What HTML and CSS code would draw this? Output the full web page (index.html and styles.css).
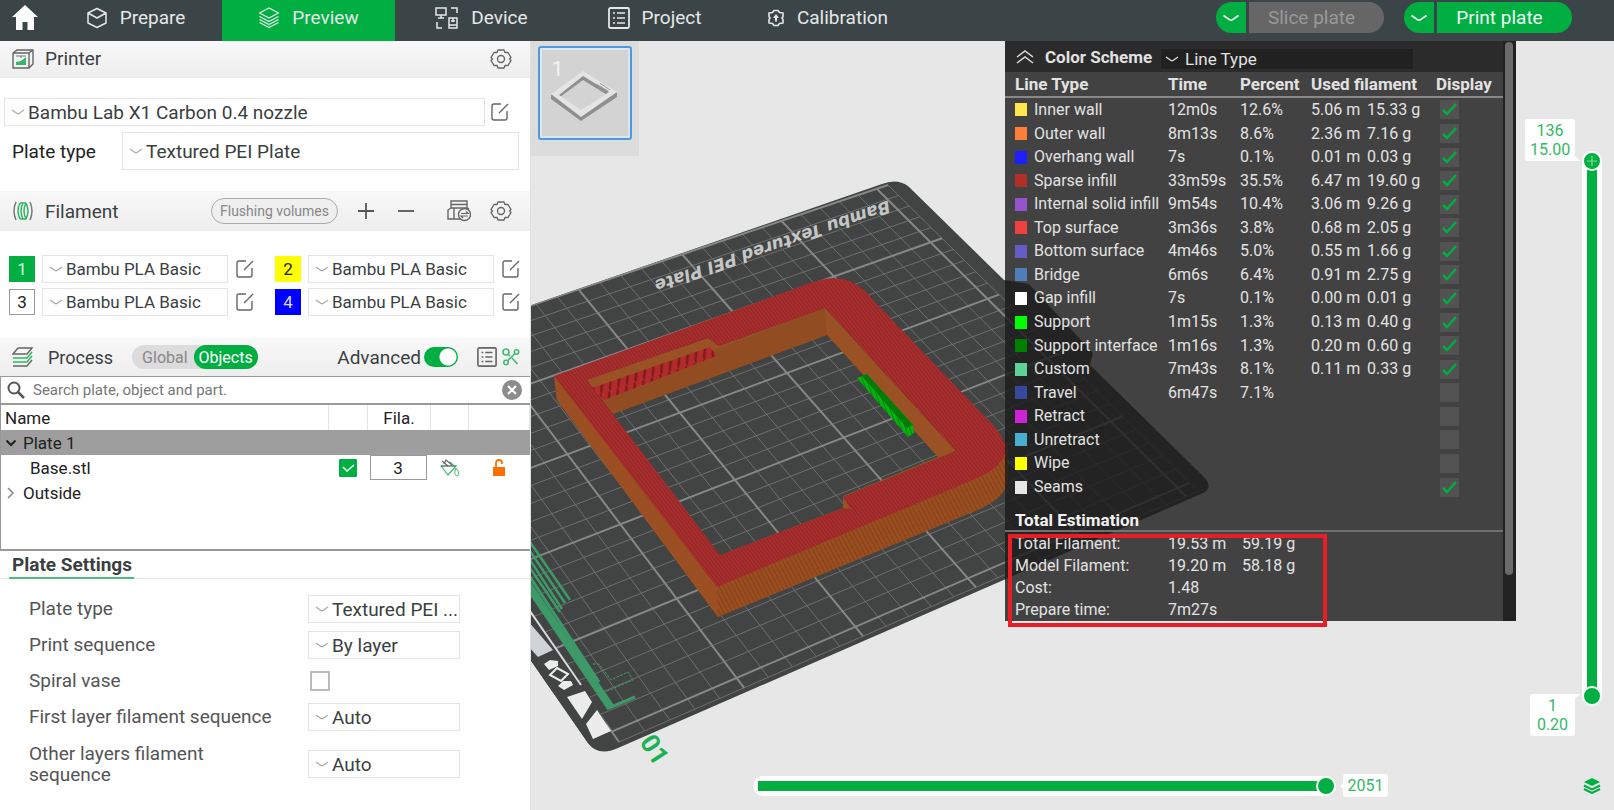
FILE: index.html
```html
<!DOCTYPE html>
<html lang="en">
<head>
<meta charset="utf-8">
<title>Preview</title>
<link rel="stylesheet" href="styles.css">
</head>
<body>
<svg class="defs" aria-hidden="true">
  <symbol id="chev" viewBox="0 0 14 8"><path d="M1 2 6 5.500Q7 6 8 5.500L13 2" fill="none" stroke="currentColor" stroke-width="1.300"/></symbol>
  <symbol id="edit" viewBox="0 0 20 20"><path d="M11 2H4Q2 2 2 4V16Q2 18 4 18H15Q17 18 17 16V9M9 11 18 2" fill="none" stroke="currentColor" stroke-width="1.400"/></symbol>
  <symbol id="gear" viewBox="0 0 22 22"><path d="M8 2 14 2 15 4.500 18 4.500 21 9.500 19.500 11 21 12.500 18 17.500 15 17.500 14 20 8 20 7 17.500 4 17.500 1 12.500 2.500 11 1 9.500 4 4.500 7 4.500Z" fill="none" stroke="currentColor" stroke-width="1.400" stroke-linejoin="round"/><circle cx="11" cy="11" r="3.500" fill="none" stroke="currentColor" stroke-width="1.400"/></symbol>
  <symbol id="list" viewBox="0 0 22 22"><rect x="1" y="1" width="20" height="20" rx="1.500" fill="none" stroke="currentColor" stroke-width="1.800"/><path d="M5 6H7M9 6H17M5 11H7M9 11H17M5 16H7M9 16H17" stroke="currentColor" stroke-width="1.600"/></symbol>
</svg>

<header class="topbar">
  <button class="home" aria-label="Home"><svg width="26" height="26" viewBox="0 0 26 26"><path d="M13 0 26 12H22V25H15.500V17H10.500V25H4V12H0Z" fill="#fff"/></svg></button>
  <nav class="tabs">
    <button class="tab"><svg width="22" height="22" viewBox="0 0 22 22"><path d="M11 1.500 20 6V16L11 20.500 2 16V6ZM2 6 11 11 20 6" fill="none" stroke="currentColor" stroke-width="1.500" stroke-linejoin="round"/></svg>Prepare</button>
    <button class="tab active"><svg width="22" height="22" viewBox="0 0 22 22"><path d="M11 1 20.500 6 11 11 1.500 6ZM1.500 9.500 11 14.500 20.500 9.500M1.500 12.500 11 17.500 20.500 12.500M1.500 15.500 11 20.500 20.500 15.500" fill="none" stroke="currentColor" stroke-width="1.400" stroke-linejoin="round"/></svg>Preview</button>
    <button class="tab"><svg width="24" height="24" viewBox="0 0 24 24"><path d="M1 2H11V9H1ZM6 9V12M3 12H9M16 2H22V7M2 16V22H7M14 12H22V22H14ZM14 19H22M18 12V16M16 15H20" fill="none" stroke="currentColor" stroke-width="1.500"/></svg>Device</button>
    <button class="tab"><svg width="22" height="22"><use href="#list"/></svg>Project</button>
    <button class="tab"><svg width="18" height="18" viewBox="0 0 18 18"><path d="M7 1.500H11L12.500 3.500 16 4V7.500L15 9 16 10.500V14L12.500 14.500 11 16.500H7L5.500 14.500 2 14V10.500L3 9 2 7.500V4L5.500 3.500Z" fill="none" stroke="currentColor" stroke-width="1.600" stroke-linejoin="round"/><path d="M9 5 12 9H10V12.500H8V9H6Z" fill="currentColor"/></svg>Calibration</button>
  </nav>
  <div class="actions">
    <div class="split"><button class="drop" aria-label="Slice options"><svg width="18" height="10"><use href="#chev"/></svg></button><button class="main off" disabled>Slice plate</button></div>
    <div class="split"><button class="drop" aria-label="Print options"><svg width="18" height="10"><use href="#chev"/></svg></button><button class="main">Print plate</button></div>
  </div>
</header>

<main class="work">
  <aside class="side">
    <h2 class="bar printer-bar">
      <svg width="22" height="20" viewBox="0 0 22 20"><path d="M1 4 5 1H21V15L17 19H1ZM1 4H17V19M17 4 21 1" fill="none" stroke="#666" stroke-width="1.400"/><path d="M4 16V13L9 12 14 8V16Z" fill="#35b865"/><path d="M4 7H14M9 7V9" stroke="#777"/></svg>
      <span>Printer</span>
      <button class="icon push" aria-label="Printer settings"><svg width="22" height="22"><use href="#gear"/></svg></button>
    </h2>
    <div class="printer">
      <div class="line">
        <span class="pick grow"><svg width="14" height="8"><use href="#chev"/></svg><select aria-label="Printer model"><option>Bambu Lab X1 Carbon 0.4 nozzle</option></select></span>
        <button class="icon" aria-label="Edit printer"><svg width="20" height="20"><use href="#edit"/></svg></button>
      </div>
      <div class="line plate-line">
        <label for="ptype">Plate type</label>
        <span class="pick tall grow"><svg width="14" height="8"><use href="#chev"/></svg><select id="ptype"><option>Textured PEI Plate</option></select></span>
      </div>
    </div>
    <h2 class="bar">
      <svg width="22" height="20" viewBox="0 0 22 20"><path d="M4 1Q0 10 4 19M18 1Q22 10 18 19" fill="none" stroke="#777" stroke-width="1.500"/><path d="M8 2Q4 10 8 18M11 2Q7 10 11 18M14 2Q10 10 14 18M14 2Q18 10 14 18M8 2H14M8 18H14" fill="none" stroke="#2fb563" stroke-width="1.500"/></svg>
      <span>Filament</span>
      <button class="flush push">Flushing volumes</button>
      <button class="icon" aria-label="Add filament"><svg width="16" height="16" viewBox="0 0 16 16"><path d="M8 0V16M0 8H16" stroke="#555" stroke-width="1.800"/></svg></button>
      <button class="icon minus" aria-label="Remove filament"><svg width="16" height="16" viewBox="0 0 16 16"><path d="M0 8H16" stroke="#555" stroke-width="1.800"/></svg></button>
      <button class="icon sync" aria-label="Sync filament"><svg width="24" height="22" viewBox="0 0 24 22"><path d="M4 1H20V8H4ZM4 4.500H20M4 8 1 10V19H14M7 8V19M20 8 22 9" fill="none" stroke="#666" stroke-width="1.400"/><circle cx="17.500" cy="14.500" r="6" fill="#f1f1f1" stroke="#666" stroke-width="1.400"/><path d="M14 13.500H21L19 11.500M21 16H14L16 18" fill="none" stroke="#666" stroke-width="1.200"/></svg></button>
      <button class="icon" aria-label="Filament settings"><svg width="22" height="22"><use href="#gear"/></svg></button>
    </h2>
    <div class="filaments">
      <div class="fil"><button class="chip green">1</button><span class="pick grow"><svg width="14" height="8"><use href="#chev"/></svg><select aria-label="Filament 1"><option>Bambu PLA Basic</option></select></span><button class="icon" aria-label="Edit filament 1"><svg width="20" height="20"><use href="#edit"/></svg></button></div>
      <div class="fil"><button class="chip yellow">2</button><span class="pick grow"><svg width="14" height="8"><use href="#chev"/></svg><select aria-label="Filament 2"><option>Bambu PLA Basic</option></select></span><button class="icon" aria-label="Edit filament 2"><svg width="20" height="20"><use href="#edit"/></svg></button></div>
      <div class="fil"><button class="chip white">3</button><span class="pick grow"><svg width="14" height="8"><use href="#chev"/></svg><select aria-label="Filament 3"><option>Bambu PLA Basic</option></select></span><button class="icon" aria-label="Edit filament 3"><svg width="20" height="20"><use href="#edit"/></svg></button></div>
      <div class="fil"><button class="chip blue">4</button><span class="pick grow"><svg width="14" height="8"><use href="#chev"/></svg><select aria-label="Filament 4"><option>Bambu PLA Basic</option></select></span><button class="icon" aria-label="Edit filament 4"><svg width="20" height="20"><use href="#edit"/></svg></button></div>
    </div>
    <div class="bar process">
      <svg width="22" height="20" viewBox="0 0 22 20"><path d="M6 1H20L15 7H1Z" fill="none" stroke="#666" stroke-width="1.400"/><path d="M1 11H15L20 5M1 15H15L20 9" fill="none" stroke="#2fb563" stroke-width="1.500"/><path d="M1 19H15L20 13" fill="none" stroke="#666" stroke-width="1.400"/></svg>
      <h2>Process</h2>
      <div class="scope"><button>Global</button><button class="on">Objects</button></div>
      <label class="adv push">Advanced<input type="checkbox" class="toggle" checked></label>
      <button class="icon table-icon" aria-label="Parameter table"><svg width="22" height="20"><use href="#list"/></svg></button>
      <button class="icon" aria-label="Compare presets"><svg width="18" height="18" viewBox="0 0 18 18"><g fill="none" stroke="#43bb73" stroke-width="1.600"><circle cx="4" cy="4" r="3"/><circle cx="14.500" cy="4" r="2.200"/><circle cx="4" cy="14.500" r="2.200"/><path d="M6 6 8 8M13 5.500 5.500 13M10 10 15.500 16"/></g></svg></button>
    </div>
    <div class="objects">
      <div class="search">
        <svg width="18" height="18" viewBox="0 0 18 18"><circle cx="7" cy="7" r="5.500" fill="none" stroke="#555" stroke-width="2"/><path d="M11 11 17 17" stroke="#555" stroke-width="2.500"/></svg>
        <input type="text" aria-label="Search" placeholder="Search plate, object and part.">
        <button class="icon" aria-label="Clear search"><svg width="20" height="20" viewBox="0 0 20 20"><circle cx="10" cy="10" r="10" fill="#8c8c8c"/><path d="M6 6 14 14M14 6 6 14" stroke="#fff" stroke-width="2.200"/></svg></button>
      </div>
      <table class="tree">
        <colgroup><col><col class="c-check"><col class="c-fila"><col class="c-paint"><col class="c-lock"></colgroup>
        <thead><tr><th>Name</th><th></th><th class="mid">Fila.</th><th></th><th></th></tr></thead>
        <tbody>
          <tr class="sel"><td colspan="5"><svg class="arrow" width="12" height="12" viewBox="0 0 12 12"><path d="M1.500 3.500 6 8 10.500 3.500" fill="none" stroke="#222" stroke-width="2"/></svg>Plate 1</td></tr>
          <tr><td class="child">Base.stl</td><td class="mid"><input type="checkbox" class="tick" aria-label="Print Base.stl" checked></td><td class="cell"><input type="text" class="num" aria-label="Filament" value="3"></td>
            <td class="mid"><svg width="20" height="18" viewBox="0 0 20 18"><path d="M1 7 8 16 16 7ZM10 3 14 7" fill="none" stroke="#43bb73" stroke-width="1.200"/><path d="M2 2 8 7M4 5 6 1 12 6M1 7H16" fill="none" stroke="#666" stroke-width="1.200"/><path d="M16 9Q21 16 17 17 13 16 16 9Z" fill="none" stroke="#43bb73"/></svg></td>
            <td class="mid"><svg class="lock" width="14" height="18" viewBox="0 0 14 18"><rect x="1" y="8" width="12" height="9" fill="#ff6f00"/><path d="M4 8V4Q4 1 7 1T10 4V5" fill="none" stroke="#ff6f00" stroke-width="1.800"/></svg></td></tr>
          <tr><td colspan="5"><svg class="arrow" width="12" height="12" viewBox="0 0 12 12"><path d="M3 1 8 6 3 11" fill="none" stroke="#888" stroke-width="1.500"/></svg>Outside</td></tr>
        </tbody>
      </table>
    </div>
    <section class="settings">
      <h3><span>Plate Settings</span></h3>
      <div class="form">
        <label for="s1">Plate type</label><span class="pick"><svg width="14" height="8"><use href="#chev"/></svg><select id="s1"><option>Textured PEI ...</option></select></span>
        <label for="s2">Print sequence</label><span class="pick"><svg width="14" height="8"><use href="#chev"/></svg><select id="s2"><option>By layer</option></select></span>
        <label for="s3">Spiral vase</label><input id="s3" class="box" type="checkbox">
        <label for="s4">First layer filament sequence</label><span class="pick"><svg width="14" height="8"><use href="#chev"/></svg><select id="s4"><option>Auto</option></select></span>
        <label for="s5" class="two">Other layers filament sequence</label><span class="pick"><svg width="14" height="8"><use href="#chev"/></svg><select id="s5"><option>Auto</option></select></span>
      </div>
    </section>
  </aside>

  <section class="view">
    <svg class="scene" viewBox="531 41 1083 769" preserveAspectRatio="xMinYMin slice" role="img" aria-label="Sliced model on the build plate">
      <defs>
        <clipPath id="bedclip"><path d="M500 316 882 184Q897 178 908 186L1004 280 1029 284 1093 353 1090 365 1205 478Q1213 488 1203 493L618 748Q598 757 588 743L500 616Z"/></clipPath>
        <pattern id="red" width="3" height="3" patternUnits="userSpaceOnUse" patternTransform="rotate(52)"><rect width="3" height="3" fill="#a82d2d"/><rect width="3" height="1" fill="#922626"/></pattern>
        <pattern id="slot" width="9" height="20" patternUnits="userSpaceOnUse" patternTransform="rotate(-18)"><rect width="9" height="20" fill="#b32a2d"/><path d="M0 20 9 0" stroke="#7c1c1c" stroke-width="2.500"/></pattern>
        <pattern id="side" width="4" height="4" patternUnits="userSpaceOnUse" patternTransform="rotate(62)"><rect width="4" height="4" fill="#9a4e20"/><rect width="4" height="1" fill="#84411a"/></pattern>
        <pattern id="support" width="4" height="4" patternUnits="userSpaceOnUse" patternTransform="rotate(-20)"><rect width="4" height="4" fill="#04b30d"/><rect width="1" height="4" fill="#03890a"/></pattern>
      </defs>
      <g clip-path="url(#bedclip)">
        <rect x="500" y="160" width="740" height="620" fill="#424443"/>
        <g id="grid"></g>
        <path d="M526 604 582 685 607 724 588 748 500 630Z" fill="#424443"/>
        <path d="M530 611 581 685" stroke="#d9dcdd" stroke-width="2"/>
        <path d="M528 621 553 650 538 657 528 646Z" fill="#cfd3d5"/>
        <path d="M585 691 592 702 582 719 567 697ZM597 710 611 731 593 739 586 724Z" fill="#ececec"/>
        <path d="M544 664 550 660 558 661 558 666 549 670ZM558 686 563 681 571 681 573 685 564 690Z" fill="#ececec"/>
        <path d="M557 668 568 674 561 681 550 675Z" fill="none" stroke="#ececec" stroke-width="2"/>
        <g fill="none" stroke="#3d9a68">
          <path d="M530 542 570 600M528 548 565 603M528 557 562 609M528 565 560 612" stroke-width="2.500"/>
          <path d="M528 585 611 708" stroke-width="8"/>
          <path d="M528 574 599 682M609 708 635 697" stroke-width="3"/>
          <path d="M593 664H599L611 680 628 672 633 680 605 692" stroke-width="1" stroke-dasharray="3 1"/>
        </g>
      </g>
      <text class="bed-label" transform="translate(889 200) rotate(161) skewX(-12)">Bambu Textured PEI Plate</text>
      <text class="bed-no" transform="translate(639 742) rotate(57)">01</text>
      <path d="M554 376 557 400 718 617 973 512Q1006 499 1008 480V442L717 580Z" fill="url(#side)"/>
      <path d="M554 376 557 400 718 617 717 586Z" fill="#9b4f22"/>
      <path fill-rule="evenodd" fill="#9a5224" d="M587 380 708 338 719 346 825 308 956 451 843 497 850 508 720 555ZM613 414 827 335 938 457 843 496V508L720 555Z"/>
      <path fill="#8c4b20" d="M825 308 827 335 613 414 598 396 719 348Z" opacity=".6"/>
      <path d="M592 388 710 347 717 356 604 400Z" fill="url(#slot)"/>
      <path fill-rule="evenodd" fill="url(#red)" d="M554 376 813 282Q850 269 873 300L993 425Q1008 442 1005 454 1000 469 973 480L717 587ZM587 380 720 555 843 508 851 509 843 497 956 451 825 308 719 346 708 338Z"/>
      <path d="M857 378 867 374 913 425 914 433 908 437Z" fill="url(#support)"/>
      <path d="M862 376 867 374 913 425 907 428Z" fill="#047a0b"/>
    </svg>

    <div class="plates">
      <button class="thumb" aria-label="Plate 1"><span>1</span>
        <svg width="88" height="88" viewBox="0 0 88 88"><path fill-rule="evenodd" fill="#8f8f8f" d="M11 46 43 25 77 44V48L41 72 11 50ZM20 48 41 64 69 47 43 31Z"/><path fill-rule="evenodd" fill="#e4e4e4" d="M11 45 43 22 77 43 41 68ZM19 46 41 61 69 43 43 27Z"/><path d="M56 35 68 42M60 34 70 41" stroke="#999"/></svg>
      </button>
    </div>

    <section class="legend">
      <div class="legend-head">
        <button class="icon" aria-label="Collapse"><svg width="18" height="14" viewBox="0 0 18 14"><path d="M1 7 9 1 17 7M1 13 9 7 17 13" fill="none" stroke="#ddd" stroke-width="1.500"/></svg></button>
        <label for="scheme">Color Scheme</label>
        <span class="scheme"><svg width="14" height="8"><use href="#chev"/></svg><select id="scheme"><option>Line Type</option></select></span>
      </div>
      <table class="types">
        <colgroup><col class="t1"><col class="t2"><col class="t3"><col class="t4"><col class="t5"><col></colgroup>
        <thead><tr><th>Line Type</th><th>Time</th><th>Percent</th><th colspan="2">Used filament</th><th class="disp">Display</th></tr></thead>
        <tbody id="rows"></tbody>
      </table>
      <h3>Total Estimation</h3>
      <table class="totals">
        <colgroup><col class="t1"><col class="t6"><col></colgroup>
        <tbody>
          <tr><th>Total Filament:</th><td>19.53 m</td><td>59.19 g</td></tr>
          <tr><th>Model Filament:</th><td>19.20 m</td><td>58.18 g</td></tr>
          <tr><th>Cost:</th><td>1.48</td><td></td></tr>
          <tr><th>Prepare time:</th><td>7m27s</td><td></td></tr>
        </tbody>
      </table>
      <div class="scroll"><div class="scroll-thumb"></div></div>
      <div class="mark"></div>
    </section>

    <div class="layers">
      <input type="range" class="vert upper" aria-label="Top layer" min="1" max="136" value="136">
      <input type="range" class="vert lower" aria-label="Bottom layer" min="1" max="136" value="1">
      <svg class="cross" width="10" height="10" viewBox="0 0 10 10"><path d="M5 0V10M0 5H10" stroke="#7fe0a2" stroke-width="1.200"/></svg>
      <output class="tip top">136<br>15.00</output>
      <output class="tip bottom">1<br>0.20</output>
    </div>
    <div class="moves">
      <input type="range" class="horiz" aria-label="Move" min="0" max="2051" value="2051">
      <output class="tip side-tip">2051</output>
    </div>
    <button class="icon stack" aria-label="Layers"><svg width="18" height="16" viewBox="0 0 18 16"><path d="M9 0 17 4 9 8 1 4Z" fill="#00ae42"/><path d="M1 7.500 9 11.500 17 7.500M1 11 9 15 17 11" fill="none" stroke="#00ae42" stroke-width="2"/></svg></button>
  </section>
</main>
<script src="app.js"></script>
</body>
</html>
```
FILE: styles.css
```css
* { box-sizing: border-box; }
body { margin: 0; min-height: 100vh; display: flex; flex-direction: column; font: 19px/21px Roboto, "Noto Sans", sans-serif; color: #3a3f41; background: #fff; overflow: hidden; }
button, input, select { font: inherit; color: inherit; margin: 0; }
button { border: 0; padding: 0; background: none; }
h2, h3 { margin: 0; font-size: 19px; font-weight: 400; }
svg { display: block; flex: none; }
.defs { position: absolute; width: 0; height: 0; }
.icon { display: flex; color: #666; }
.push { margin-left: auto; }
.grow { flex: 1; }

.topbar { display: flex; height: 41px; background: #3b4446; color: #e6e8e8; }
.home { width: 49px; padding: 5px 0 0 12px; display: flex; }
.tabs { display: flex; flex: 1; }
.tab { width: 173px; display: flex; align-items: center; justify-content: center; gap: 12px; padding-bottom: 6px; }
.tab.active { background: #00ae42; }
.actions { display: flex; gap: 20px; padding: 2px 42px 0 0; }
.split { display: flex; gap: 3px; height: 31px; }
.drop { width: 30px; background: #00ae42; border-radius: 16px 0 0 16px; display: flex; align-items: center; justify-content: center; color: #fff; }
.main { width: 135px; padding-right: 10px; background: #00ae42; border-radius: 0 16px 16px 0; color: #eefaf2; }
.main.off { background: #666; color: #999; }

.work { flex: 1; display: flex; }
.side { width: 32.9%; background: #fff; border-right: 1px solid #e0e0e0; display: flex; flex-direction: column; }
.bar { display: flex; align-items: center; height: 40px; padding: 0 18px 0 12px; background: linear-gradient(#f8f8f8, #eeeeee); }
.bar > span { margin-left: 11px; }
.printer-bar { height: 37px; padding-bottom: 2px; }
.printer { padding: 20px 11px 21px 4px; display: flex; flex-direction: column; gap: 6px; }
.line { display: flex; align-items: center; gap: 5px; padding-right: 9px; }
.plate-line { padding: 0 0 0 8px; }
.plate-line label { width: 105px; color: #222; }
.pick { display: flex; align-items: center; height: 28px; border: 1px solid #e4e4e4; padding-left: 6px; min-width: 0; }
.pick svg { color: #aaa; }
.pick.tall { height: 38px; }
.pick select { appearance: none; flex: 1; min-width: 0; border: 0; padding: 0 0 0 3px; background: none; height: 100%; }
.flush { border: 1px solid #aaa; border-radius: 13px; height: 26px; width: 127px; font-size: 14px; color: #888; background: #efefef; margin-right: 20px; }
.minus { margin: 0 33px 0 24px; }
.sync { margin-right: 19px; }
.filaments { padding: 24px 9px 22px 9px; display: grid; grid-template-columns: 1fr 1fr; gap: 5px 20px; }
.fil { display: flex; align-items: center; font-size: 17px; }
.fil .icon { margin-left: 7px; }
.chip { width: 26px; height: 26px; margin-right: 7px; color: #222; }
.green { background: #00ae42; color: #d5f5df; }
.yellow { background: #ff0; }
.white { border: 1px solid #999; }
.blue { background: #00f; color: #dde; }
.process { height: 38px; padding-right: 10px; }
.process h2 { margin-left: 14px; font-size: 18px; }
.scope { display: flex; margin-left: 19px; border-radius: 12px; background: #dcdcdc; height: 24px; font-size: 16px; }
.scope button { padding: 0 0 0 10px; color: #888; }
.scope .on { width: 64px; padding: 0; margin-left: 6px; border-radius: 12px; background: #00ae42; color: #fff; }
.adv { display: flex; align-items: center; gap: 3px; }
.toggle { appearance: none; width: 34px; height: 20px; border-radius: 10px; background: radial-gradient(circle at 24px 10px, #fff 8px, #00ae42 9px); }
.table-icon { margin: 0 4px 0 18px; }
.objects { height: 175px; border: 1px solid #999; border-width: 1px 0 2px 1px; }
.search { display: flex; align-items: center; height: 28px; padding: 0 8px 0 6px; border-bottom: 2px solid #999; }
.search input { flex: 1; border: 0; outline: 0; padding: 0 0 0 8px; background: none; font-size: 15px; }
.search input::placeholder { color: #777; opacity: 1; }
.tree { width: 100%; border-collapse: collapse; table-layout: fixed; font-size: 17px; color: #222; }
.tree th, .tree td { height: 25px; padding: 0 0 0 4px; font-weight: 400; text-align: left; line-height: 20px; }
.tree th { border-right: 1px solid #e4e4e4; }
.tree .mid { text-align: center; padding: 0; }
.tree .mid svg, .mid .tick { margin: 0 auto; }
.c-check { width: 39px; } .c-fila { width: 63px; } .c-paint { width: 38px; } .c-lock { width: 61px; }
.sel { background: #9e9e9e; }
.arrow { display: inline-block; margin-right: 6px; }
.tree .child { padding-left: 29px; }
.tree .cell { padding: 0 4px 0 2px; }
.num { display: block; width: 100%; height: 25px; border: 1px solid #999; text-align: center; padding: 0; }
.tick { appearance: none; display: block; width: 18px; height: 18px; background: #00ae42 url("data:image/svg+xml,%3Csvg xmlns='http://www.w3.org/2000/svg' viewBox='0 0 18 18'%3E%3Cpath d='M4 8 8 12 15 6' fill='none' stroke='white' stroke-width='1.500'/%3E%3C/svg%3E"); border-radius: 1px; }
.settings h3 { border-bottom: 1px solid #e4e4e4; padding-left: 9px; height: 28px; }
.settings h3 span { display: inline-block; height: 28px; padding: 3px 2px 0 3px; font-weight: 700; border-bottom: 2px solid #4dbd7b; }
.form { display: grid; grid-template-columns: 279px 152px; align-items: center; row-gap: 8px; padding: 16px 0 0 29px; }
.form label { height: 28px; line-height: 28px; color: #555; }
.form .two { width: 200px; height: 50px; line-height: 21px; padding-top: 4px; }
.box { appearance: none; width: 20px; height: 20px; border: 2px solid #bbb; margin-left: 2px; }

.view { flex: 1; position: relative; background: #e7e7e7; overflow: hidden; }
.scene { position: absolute; inset: 0; width: 100%; height: 100%; }
.bed-label { font: 700 17px "DejaVu Sans", sans-serif; fill: #c4c7c6; }
.bed-no { font: 700 26px Roboto, sans-serif; fill: #1cb254; }
.minor { stroke: #6d6f6e; stroke-width: 1; }
.major { stroke: #868887; stroke-width: 2; }
.plates { position: absolute; left: 0; top: 0; width: 108px; height: 115px; padding: 5px 0 0 7px; background: #dcdcdc; }
.thumb { position: relative; display: block; width: 94px; height: 94px; background: #d3d3d3; border: 2px solid #4c9be0; border-radius: 3px; box-shadow: inset 0 0 0 2px #dde6ef; }
.thumb span { position: absolute; left: 12px; top: 11px; color: #f4f4f4; font-size: 20px; }

.legend { position: absolute; right: 98px; top: 0; width: 511px; padding-right: 12px; background: rgba(27, 27, 27, .81); color: #e2e2e2; font-size: 16px; line-height: 20px; }
.legend-head { display: flex; align-items: center; height: 31px; padding-left: 11px; background: rgba(20, 20, 20, .5); }
.legend-head label { margin: 0 9px 0 11px; width: 106px; font-size: 17px; font-weight: 700; white-space: nowrap; }
.scheme { display: flex; align-items: center; width: 254px; height: 22px; margin-top: 4px; padding-left: 4px; background: #212121; border: 1px solid #2c2c2c; }
.scheme select { appearance: none; flex: 1; border: 0; background: none; padding: 0 0 0 6px; font-size: 17px; }
.types, .totals { width: 100%; border-collapse: collapse; table-layout: fixed; }
.types { height: 427px; }
.types th, .types td, .totals th, .totals td { padding: 0; text-align: left; white-space: nowrap; }
.types thead th { height: 25px; border-bottom: 2px solid #888; font-size: 17px; }
.types th:first-child, .types td:first-child, .totals th { padding-left: 10px; }
.types .disp { padding-left: 13px; }
.types td:last-child { padding-left: 17px; }
.t1 { width: 163px; } .t2 { width: 72px; } .t3 { width: 71px; } .t4 { width: 56px; } .t5 { width: 56px; } .t6 { width: 74px; }
.name { display: flex; align-items: center; gap: 7px; }
.swatch { width: 12px; height: 13px; }
.show { appearance: none; display: block; width: 19px; height: 19px; background: #525252; }
.show:checked { background-image: url("data:image/svg+xml,%3Csvg xmlns='http://www.w3.org/2000/svg' viewBox='0 0 19 19'%3E%3Cpath d='M3 10 7 14 16 4' fill='none' stroke='%2300ae42' stroke-width='2.500'/%3E%3C/svg%3E"); }
.legend h3 { height: 33px; padding: 11px 0 0 10px; font-size: 17px; font-weight: 700; line-height: 20px; border-bottom: 2px solid #707070; color: #f2f2f2; }
.totals { margin-top: 1px; }
.totals th, .totals td { height: 22px; font-weight: 400; }
.scroll { position: absolute; right: 0; top: 0; bottom: 0; width: 13px; background: #222; padding: 1px 3px 0 2px; }
.scroll-thumb { height: 92%; border-radius: 4px; background: #6a6a6a; }
.mark { position: absolute; left: 3px; bottom: -6px; width: 319px; height: 93px; border: 4px solid #e81d25; }

.layers { position: absolute; right: 12px; top: 110px; width: 20px; height: 555px; border-radius: 10px; background: #fff; }
.layers::before { content: ""; position: absolute; inset: 5px; background: #00ae42; border-radius: 5px; }
.vert { appearance: none; position: absolute; inset: 0; width: 20px; height: 100%; margin: 0; background: none; writing-mode: vertical-lr; direction: rtl; pointer-events: none; }
input[type="range"]::-webkit-slider-thumb { appearance: none; width: 20px; height: 20px; border: 2px solid #f4fbf6; border-radius: 50%; background: #00ae42; pointer-events: auto; }
.cross { position: absolute; left: 5px; top: 5px; }
.tip { position: absolute; right: 27px; background: #fff; border-radius: 3px; color: #35b865; font-size: 16px; line-height: 19px; padding: 2px 5px; text-align: center; }
.tip.top { top: -32px; width: 50px; }
.tip.bottom { bottom: -30px; width: 45px; }
.tip::after { content: ""; position: absolute; right: -5px; border: 5px solid transparent; }
.tip.top::after { bottom: 0; border-bottom-color: #fff; }
.tip.bottom::after { top: 0; border-top-color: #fff; }
.moves { position: absolute; left: 222px; right: 226px; bottom: 13px; display: flex; align-items: center; gap: 7px; }
.horiz { appearance: none; flex: 1; height: 20px; border-radius: 10px; background: linear-gradient(#00ae42, #00ae42) 5px 5px / calc(100% - 15px) 10px no-repeat, #fff; }
.side-tip { position: relative; right: auto; width: 45px; height: 23px; padding: 2px 4px; }
.side-tip::after { right: auto; left: -8px; top: 7px; border-right-color: #fff; }
.stack { position: absolute; right: 13px; bottom: 16px; }
```
FILE: app.js
```js
const rows = [
  ["Inner wall", "#ffe64d", "12m0s", "12.6%", "5.06 m", "15.33 g", 1],
  ["Outer wall", "#ff7d38", "8m13s", "8.6%", "2.36 m", "7.16 g", 1],
  ["Overhang wall", "#1f1fff", "7s", "0.1%", "0.01 m", "0.03 g", 1],
  ["Sparse infill", "#b03029", "33m59s", "35.5%", "6.47 m", "19.60 g", 1],
  ["Internal solid infill", "#9654cc", "9m54s", "10.4%", "3.06 m", "9.26 g", 1],
  ["Top surface", "#f04040", "3m36s", "3.8%", "0.68 m", "2.05 g", 1],
  ["Bottom surface", "#665cc7", "4m46s", "5.0%", "0.55 m", "1.66 g", 1],
  ["Bridge", "#4d80ba", "6m6s", "6.4%", "0.91 m", "2.75 g", 1],
  ["Gap infill", "#ffffff", "7s", "0.1%", "0.00 m", "0.01 g", 1],
  ["Support", "#00ff00", "1m15s", "1.3%", "0.13 m", "0.40 g", 1],
  ["Support interface", "#008000", "1m16s", "1.3%", "0.20 m", "0.60 g", 1],
  ["Custom", "#5ed194", "7m43s", "8.1%", "0.11 m", "0.33 g", 1],
  ["Travel", "#38489b", "6m47s", "7.1%", "", "", 0],
  ["Retract", "#cd22d6", "", "", "", "", 0],
  ["Unretract", "#49adcf", "", "", "", "", 0],
  ["Wipe", "#ffff00", "", "", "", "", 0],
  ["Seams", "#e6e6e6", "", "", "", "", 1]
];
document.getElementById("rows").innerHTML = rows.map(r =>
  `<tr><td><span class="name"><i class="swatch" style="background:${r[1]}"></i>${r[0]}</span></td>` +
  `<td>${r[2]}</td><td>${r[3]}</td><td>${r[4]}</td><td>${r[5]}</td>` +
  `<td><input type="checkbox" class="show" aria-label="Show ${r[0]}"${r[6] ? " checked" : ""}></td></tr>`).join("");

// Perspective mapping of the 256 mm bed: corners are front-left, front-right, back-right, back-left.
const [p0, p1, p2, p3] = [[619, 742], [1198, 491], [888, 185], [357, 364]];
const dx1 = p1[0] - p2[0], dx2 = p3[0] - p2[0], sx = p0[0] - p1[0] + p2[0] - p3[0];
const dy1 = p1[1] - p2[1], dy2 = p3[1] - p2[1], sy = p0[1] - p1[1] + p2[1] - p3[1];
const det = dx1 * dy2 - dx2 * dy1;
const g = (sx * dy2 - dx2 * sy) / det, h = (dx1 * sy - sx * dy1) / det;
function project(u, v) {
  const w = g * u + h * v + 1;
  const at = i => ((p1[i] - p0[i] + g * p1[i]) * u + (p3[i] - p0[i] + h * p3[i]) * v + p0[i]) / w;
  return at(0).toFixed(1) + " " + at(1).toFixed(1);
}
let minor = "", major = "";
function add(bold, a, b) {
  const d = "M" + a + "L" + b;
  if (bold) major += d; else minor += d;
}
for (let x = 0; x <= 256; x += 10) add(x % 50 === 0, project(x / 256, 0), project(x / 256, 1));
for (let y = 6; y <= 256; y += 10) add((y - 6) % 50 === 0, project(0, y / 256), project(1, y / 256));
add(false, project(0, 0), project(1, 0));
add(false, project(1, 0), project(1, 1));
document.getElementById("grid").innerHTML = `<path class="minor" d="${minor}"/><path class="major" d="${major}"/>`;
```
